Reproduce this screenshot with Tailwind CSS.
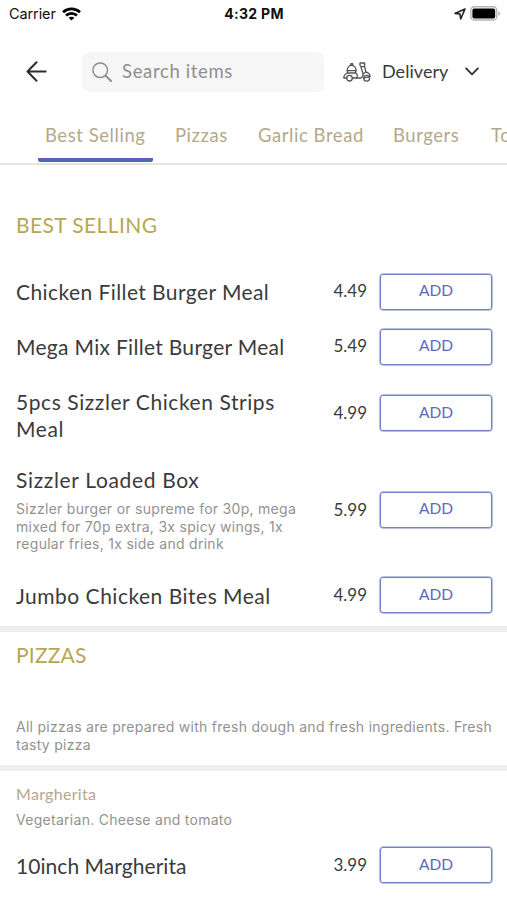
<!DOCTYPE html>
<html lang="en">
<head>
    <meta charset="UTF-8">
    <meta name="viewport" content="width=device-width, initial-scale=1.0">
    <script src="https://cdn.jsdelivr.net/npm/@tailwindcss/browser@4"></script>
    <title>Menu</title>
</head>
<body class="bg-white">
<div class="w-[507px] h-[900px] overflow-hidden bg-white font-[Lato,sans-serif] text-[#3b3b3b]">

    <!-- Status bar -->
    <div class="flex items-center h-[27px] pl-[9px] pr-[6px] font-[Inter,sans-serif] text-[#111]">
        <div class="flex items-center flex-1 gap-[6px]">
            <span class="text-[14.5px] tracking-[-0.1px]">Carrier</span>
            <svg class="w-[19px] h-[14px]" viewBox="0 0 19 14" fill="none" stroke="#000" stroke-width="2.7">
                <path d="M1 5.2C5.8 .7 13.2 .7 18 5.2"/>
                <path d="M4 8.5C7.2 5.6 11.8 5.6 15 8.5"/>
                <path d="M9.5 13.6L6.6 10.7C8.2 9.3 10.8 9.3 12.4 10.7Z" fill="#000" stroke="none"/>
            </svg>
        </div>
        <span class="pr-[2px] text-[14px] font-bold tracking-[0.3px]">4:32 PM</span>
        <div class="flex items-center justify-end flex-1 gap-[4px]">
            <svg class="w-3 h-3" viewBox="0 0 12 12" fill="none" stroke="#222" stroke-width="1.6" stroke-linejoin="round">
                <path d="M11 1L1 5.4L6 6L6.7 11Z"/>
            </svg>
            <svg class="w-[31px] h-[15px]" viewBox="0 0 31 15">
                <rect x=".8" y=".8" width="26" height="13.2" rx="3.6" fill="#fff" stroke="#b5b5b5" stroke-width="1.4"/>
                <rect x="2.4" y="2.4" width="22.8" height="10" rx="2" fill="#000"/>
                <path d="M28.4 5C30.4 5.6 30.4 9.2 28.4 9.8Z" fill="#b5b5b5"/>
            </svg>
        </div>
    </div>

    <!-- Header -->
    <div class="flex items-center h-[89px] pl-[26px]">
        <svg class="w-[21px] h-[21px]" viewBox="0 0 21 21" fill="none" stroke="#2d2d2d" stroke-width="2" stroke-linecap="round" stroke-linejoin="round">
            <path d="M19.6 10.5H1.5M10.5 1.2L1.5 10.5L10.5 19.8"/>
        </svg>
        <div class="flex items-center w-[242px] h-10 ml-[35px] pl-[10px] rounded-lg bg-[#f6f6f6] text-[#8e8e8e]">
            <svg class="w-5 h-5" viewBox="0 0 20 20" fill="none" stroke="#8e8e8e" stroke-width="1.5" stroke-linecap="round">
                <circle cx="8.2" cy="8.2" r="7.3"/>
                <path d="M13.6 13.6L19 19" stroke-width="2"/>
            </svg>
            <span class="ml-[10px] text-[18.5px] tracking-[0.65px]">Search items</span>
        </div>
        <svg class="w-7 h-5 ml-[19px]" viewBox="0 0 28 20" fill="none" stroke="#555" stroke-width="1.3" stroke-linecap="round" stroke-linejoin="round">
            <path d="M4.2 8.5C4.2 1.6 13 1.6 13 8.5M7.8 3.2V1.6H9.6V3.2M4 8.6H13.2"/>
            <path d="M4.6 8.5L4.3 11H12.4L13 8.5M4.3 11C2 12 .8 13.5 .8 16H3.6M9.4 16H13.4C15 15 14.4 11 12.4 11"/>
            <circle cx="6.5" cy="16.2" r="2.8"/>
            <path d="M13.4 16H18C19.6 15 20.4 13 20 11.6L18 5.2M17 1H21.6V4.6H18.2L17 3.4ZM21.6 4.6L22.8 9.8C25.5 10.6 27 12 27.2 14.4L21 16.2"/>
            <path d="M20.2 11.8L23 10"/>
            <circle cx="23.6" cy="16.2" r="2.9"/>
        </svg>
        <span class="w-[90px] ml-[11px] text-[18px] tracking-[0.05px]">Delivery</span>
        <svg class="w-[14px] h-[9px] -ml-[7px]" viewBox="0 0 15 9" fill="none" stroke="#333" stroke-width="2" stroke-linecap="round" stroke-linejoin="round">
            <path d="M1.2 1.2L7.5 7.5L13.8 1.2"/>
        </svg>
    </div>

    <!-- Category tabs -->
    <div class="flex h-[49px] pl-[38px] border-b-2 border-[#e4e4e4] overflow-hidden whitespace-nowrap text-[18.5px] leading-[38px] tracking-[0.55px] text-[#b5a88b]">
        <div class="shrink-0 w-[115px] h-[46px] px-[7px] border-b-4 border-[#5563b8] rounded-b-xs">Best Selling</div>
        <div class="shrink-0 w-[83px] ml-[22px]">Pizzas</div>
        <div class="shrink-0 w-[135px]">Garlic Bread</div>
        <div class="shrink-0 w-[98px]">Burgers</div>
        <div class="shrink-0">To</div>
    </div>

    <!-- Best selling -->
    <h2 class="h-[99px] pl-4 pt-[46px] text-[21px] leading-[28px] tracking-[0.4px] text-[#b9a653]">BEST SELLING</h2>
    <div class="flex items-center h-[55px] pl-4 pr-[15px]">
        <div class="w-[300px] text-[21px] leading-[27px] tracking-[0.42px]">Chicken Fillet Burger Meal</div>
        <div class="w-[51px] pb-[2px] text-right text-[17px]">4.49</div>
        <button class="w-[112px] h-[36px] ml-[13px] pb-px border border-[#7481c6] shadow-[0_0_0_0.5px_#7481c6] rounded-[3px] text-[15.5px] text-[#5d69bd]">ADD</button>
    </div>
    <div class="flex items-center h-[55px] pl-4 pr-[15px]">
        <div class="w-[300px] text-[21px] leading-[27px] tracking-[0.3px]">Mega Mix Fillet Burger Meal</div>
        <div class="w-[51px] pb-[2px] text-right text-[17px]">5.49</div>
        <button class="w-[112px] h-[36px] ml-[13px] pb-px border border-[#7481c6] shadow-[0_0_0_0.5px_#7481c6] rounded-[3px] text-[15.5px] text-[#5d69bd]">ADD</button>
    </div>
    <div class="flex items-center h-[78px] pl-4 pr-[15px]">
        <div class="w-[300px] pt-[4px] text-[21px] leading-[27px] tracking-[0.57px]">5pcs Sizzler Chicken Strips<br>Meal</div>
        <div class="w-[51px] text-right text-[17px]">4.99</div>
        <button class="w-[112px] h-[36px] ml-[13px] pb-px border border-[#7481c6] shadow-[0_0_0_0.5px_#7481c6] rounded-[3px] text-[15.5px] text-[#5d69bd]">ADD</button>
    </div>
    <div class="flex items-center h-[115px] pl-4 pr-[15px]">
        <div class="w-[300px]">
            <div class="text-[21px] leading-[27px] tracking-[0.66px]">Sizzler Loaded Box</div>
            <p class="pt-[7px] font-[Inter,sans-serif] text-[14px] leading-[17.5px] tracking-[0.28px] text-[#929292] whitespace-nowrap">Sizzler burger or supreme for 30p, mega<br>mixed for 70p extra, 3x spicy wings, 1x<br>regular fries, 1x side and drink</p>
        </div>
        <div class="w-[51px] text-right text-[17px]">5.99</div>
        <button class="w-[112px] h-[36px] ml-[13px] pb-px border border-[#7481c6] shadow-[0_0_0_0.5px_#7481c6] rounded-[3px] text-[15.5px] text-[#5d69bd]">ADD</button>
    </div>
    <div class="flex items-center h-[56px] pl-4 pr-[15px]">
        <div class="w-[300px] pt-px text-[21px] leading-[27px] tracking-[0.5px]">Jumbo Chicken Bites Meal</div>
        <div class="w-[51px] text-right text-[17px]">4.99</div>
        <button class="w-[112px] h-[36px] ml-[13px] pb-px border border-[#7481c6] shadow-[0_0_0_0.5px_#7481c6] rounded-[3px] text-[15.5px] text-[#5d69bd]">ADD</button>
    </div>

    <!-- Pizzas -->
    <div class="h-[6px] mt-[3px] bg-[#eeeeee]"></div>
    <h2 class="pl-4 pt-[9px] text-[21px] leading-[28px] tracking-[0.2px] text-[#b9a653]">PIZZAS</h2>
    <p class="h-[96px] pl-4 pt-[49px] font-[Inter,sans-serif] text-[14px] leading-[17.5px] tracking-[0.28px] text-[#929292] whitespace-nowrap">All pizzas are prepared with fresh dough and fresh ingredients. Fresh<br>tasty pizza</p>
    <div class="h-[6px] bg-[#eeeeee]"></div>
    <h3 class="pl-4 pt-[12px] text-base leading-[22px] tracking-[0.3px] text-[#b5a88b]">Margherita</h3>
    <p class="pl-4 pt-[6px] font-[Inter,sans-serif] text-[14px] leading-[17.5px] tracking-[0.28px] text-[#929292]">Vegetarian. Cheese and tomato</p>
    <div class="flex items-center h-[55px] mt-[9px] pl-4 pr-[15px]">
        <div class="w-[300px] pt-px text-[21px] leading-[27px] tracking-[0.05px]">10inch Margherita</div>
        <div class="w-[51px] text-right text-[17px]">3.99</div>
        <button class="w-[112px] h-[36px] ml-[13px] pb-px border border-[#7481c6] shadow-[0_0_0_0.5px_#7481c6] rounded-[3px] text-[15.5px] text-[#5d69bd]">ADD</button>
    </div>
</div>
</body>
</html>
